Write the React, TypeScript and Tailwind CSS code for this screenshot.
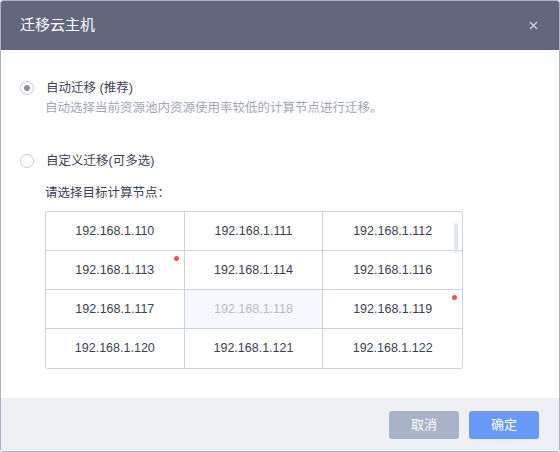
import React from "react";

const rows = [
  ["192.168.1.110", "192.168.1.111", "192.168.1.112"],
  ["192.168.1.113", "192.168.1.114", "192.168.1.116"],
  ["192.168.1.117", "192.168.1.118", "192.168.1.119"],
  ["192.168.1.120", "192.168.1.121", "192.168.1.122"],
];

const disabled = ["192.168.1.118"];
const flagged = ["192.168.1.113", "192.168.1.119"];

function Radio({ checked }: { checked?: boolean }) {
  return (
    <span className="w-[14px] h-[14px] rounded-full border border-[#c6cbd8] bg-white flex items-center justify-center shrink-0">
      {checked && <span className="w-[6px] h-[6px] rounded-full bg-[#8b90a1]" />}
    </span>
  );
}

export default function App() {
  return (
    <div
      className="w-[560px] h-[452px] flex flex-col bg-white border border-[#aab3c7] rounded-[3px] overflow-hidden"
      style={{ fontFamily: '"Liberation Sans", "Noto Sans CJK SC", sans-serif' }}
    >
      <div className="h-[49px] shrink-0 bg-[#62667f] flex items-center justify-between pl-[19px] pr-[21px]">
        <span className="text-white text-[15px]">迁移云主机</span>
        <svg width="9" height="9" viewBox="0 0 9 9" className="text-[#d3d6df]">
          <path d="M1 1L8 8M8 1L1 8" stroke="currentColor" strokeWidth="1.3" />
        </svg>
      </div>

      <div className="flex-1 pl-[18px] pr-[96px] pt-[28px]">
        <div className="flex items-center gap-[12px] h-[20px] pl-px">
          <Radio checked />
          <span className="text-[12.5px] text-[#3c4055]">自动迁移 (推荐)</span>
        </div>
        <div className="pl-[26px] text-[12.5px] leading-[20px] text-[#a2a7b8]">
          自动选择当前资源池内资源使用率较低的计算节点进行迁移。
        </div>

        <div className="flex items-center gap-[12px] h-[20px] mt-[33px] pl-px">
          <Radio />
          <span className="text-[12.5px] text-[#3c4055]">自定义迁移(可多选)</span>
        </div>

        <div className="pl-[26px] mt-[12px]">
          <div className="text-[12.5px] leading-[20px] text-[#3c4055]">请选择目标计算节点：</div>
          <div className="relative mt-[8px] border border-[#cdd2df] rounded-[3px] grid grid-cols-3">
            {rows.map((row, ri) =>
              row.map((ip, ci) => (
                <div
                  key={ip}
                  className={
                    "relative h-[39px] flex items-center justify-center text-[12.5px] " +
                    (ri < 3 ? "border-b border-[#cdd2df] " : "h-[38px] ") +
                    (ci < 2 ? "border-r border-[#cdd2df] " : "") +
                    (disabled.includes(ip) ? "bg-[#f7f8fd] text-[#b5bac8]" : "text-[#3b3f52]")
                  }
                >
                  {ip}
                  {flagged.includes(ip) && (
                    <span className="absolute top-[5px] right-[5px] w-[5px] h-[5px] rounded-full bg-[#ee5552]" />
                  )}
                </div>
              ))
            )}
            <span className="absolute top-[11px] right-[4px] w-[4px] h-[30px] rounded-full bg-[#e3e5f0]" />
          </div>
        </div>
      </div>

      <div className="h-[53px] shrink-0 bg-[#eef0f4] flex items-center justify-end gap-[10px] pr-[20px]">
        <button className="w-[70px] h-[28px] rounded-[3px] bg-[#a9b3c7] text-white text-[13px]">取消</button>
        <button className="w-[70px] h-[28px] rounded-[3px] bg-[#6699f8] text-white text-[13px]">确定</button>
      </div>
    </div>
  );
}
